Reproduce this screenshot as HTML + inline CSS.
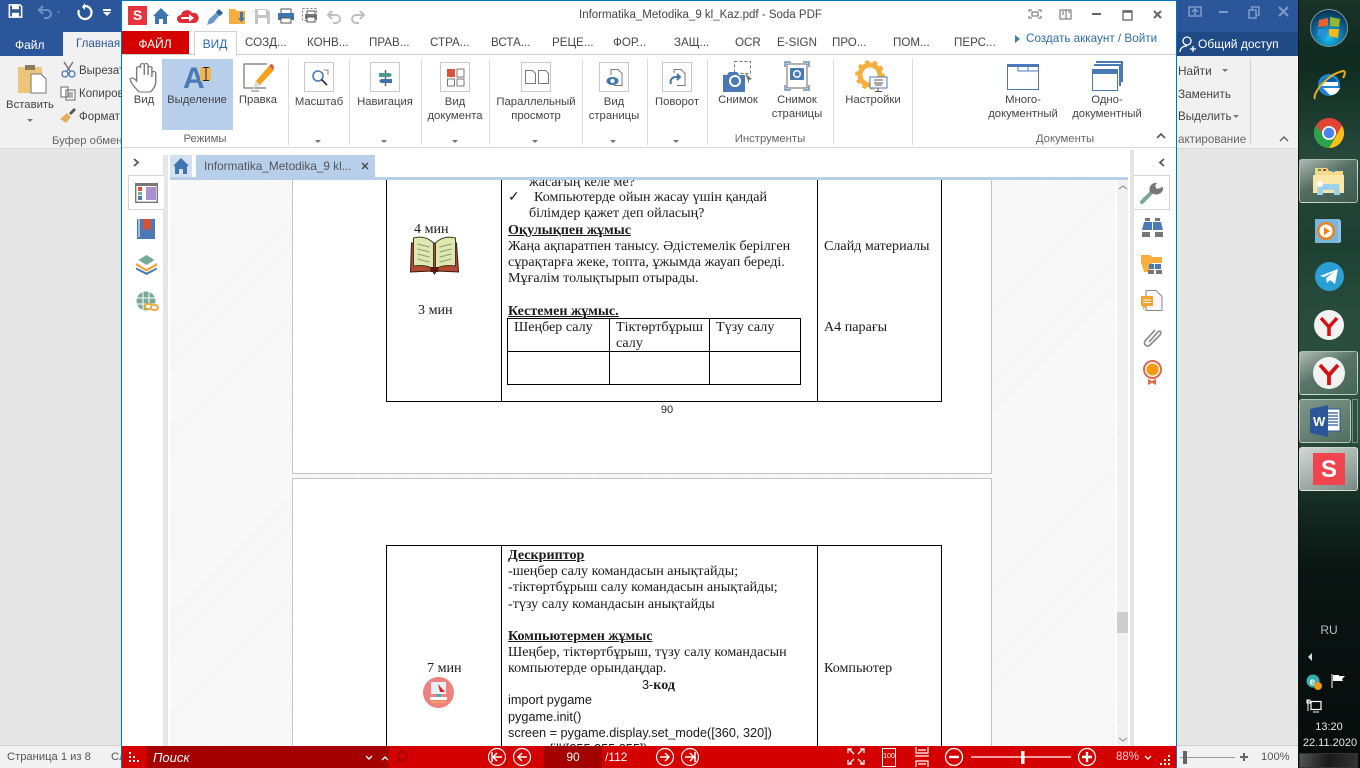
<!DOCTYPE html>
<html><head><meta charset="utf-8"><style>
html,body{margin:0;padding:0;width:1360px;height:768px;overflow:hidden;background:#e6e6e6}
#r{position:relative;width:1360px;height:768px;overflow:hidden;font-family:"Liberation Sans",sans-serif;font-size:11.3px;color:#444}
.a{position:absolute}
.t{position:absolute;white-space:nowrap;line-height:14px}
.c{position:absolute;white-space:nowrap;line-height:14px;text-align:center;transform:translateX(-50%)}
.s{position:absolute;width:1px;background:#dcdcdc;top:59px;height:86px}
.b{position:absolute;width:28px;height:28px;border:1px solid #c8c8c8;background:#fff;top:62px}
.p{position:absolute;white-space:nowrap;font-family:"Liberation Serif",serif;font-size:14.1px;line-height:16px;color:#1a1a1a}
.m{font-family:"Liberation Sans",sans-serif;font-size:12.7px}
.k{position:absolute;background:#000}
.tab{position:absolute;top:36px;white-space:nowrap;line-height:14px;color:#444;font-size:11.6px}
.w{position:absolute;white-space:nowrap;color:#444;font-size:11.5px;line-height:14px}
svg{position:absolute;overflow:visible}
.ar{position:absolute;width:0;height:0;border-left:3px solid transparent;border-right:3px solid transparent;border-top:3px solid #777}
.btn{position:absolute;left:1299px;width:59px;border:1px solid rgba(255,255,255,.55);border-radius:3px;background:linear-gradient(150deg,rgba(255,255,255,.62),rgba(255,255,255,.22) 45%,rgba(255,255,255,.12));box-sizing:border-box}
</style></head><body><div id="r">

<!-- Word left -->
<div class="a" style="left:0;top:0;width:122px;height:56px;background:#2b579a"></div>
<div class="a" style="left:63px;top:32px;width:59px;height:24px;background:#f1f1f1"></div>
<div class="t" style="left:15px;top:38px;color:#fff;font-size:12px">Файл</div>
<div class="t" style="left:76px;top:37px;color:#2b579a;font-size:11.600px">Главная</div>
<div class="a" style="left:0;top:56px;width:122px;height:92px;background:#f1f1f1;border-bottom:1px solid #d8d8d8"></div>
<svg style="left:8px;top:4px" width="15" height="14" viewBox="0 0 16 16"><path d="M1 1h12l2 2v12H1z" fill="none" stroke="#fff" stroke-width="1.800"/><path d="M4 1h8v5H4zM4 10h8v5H4z" fill="#fff"/></svg>
<svg style="left:36px;top:4px" width="26" height="16" viewBox="0 0 26 16"><path d="M4 6h7a4 4 0 0 1 0 8H8M7 2L3 6l4 4" fill="none" stroke="#6f8fc0" stroke-width="2"/><path d="M21 7l3 0-1.500 2z" fill="#6f8fc0"/></svg>
<svg style="left:76px;top:3px" width="18" height="18" viewBox="0 0 18 18"><path d="M9 3a6.500 6.500 0 1 1-6 4" fill="none" stroke="#fff" stroke-width="2.200"/><path d="M9 0v7l-3-3z" fill="#fff"/></svg>
<div class="a" style="left:103px;top:9px;width:8px;height:2px;background:#fff"></div>
<div class="a" style="left:103px;top:12px;border-left:4px solid transparent;border-right:4px solid transparent;border-top:4px solid #fff"></div>
<svg style="left:18px;top:64px" width="30" height="30" viewBox="0 0 30 30"><rect x="0" y="3" width="24" height="26" fill="#eac57a"/><rect x="7" y="1" width="10" height="5" fill="#8a7a60"/><path d="M13 12h10l5 5v14H13z" fill="#fff" stroke="#777" transform="translate(0,-2)"/></svg>
<div class="c" style="left:30px;top:98px">Вставить</div><div class="ar" style="left:27px;top:119px"></div>
<svg style="left:61px;top:62px" width="15" height="16" viewBox="0 0 15 16"><path d="M3 0l6 9M12 0L6 9" stroke="#777" stroke-width="1.500"/><circle cx="4" cy="12" r="3" fill="none" stroke="#4a7ab5" stroke-width="1.300"/><circle cx="11" cy="12" r="3" fill="none" stroke="#4a7ab5" stroke-width="1.300"/></svg>
<div class="w" style="left:79px;top:64px">Вырезать</div>
<svg style="left:60px;top:86px" width="16" height="15" viewBox="0 0 16 15"><path d="M1 1h7v10H1zM6 4h9v10H6z" fill="#fff" stroke="#666"/><path d="M8 7h5M8 9h5M8 11h5" stroke="#666"/></svg>
<div class="w" style="left:79px;top:87px">Копировать</div>
<svg style="left:60px;top:108px" width="16" height="15" viewBox="0 0 16 15"><path d="M0 11l7-6 4 4-5 6z" fill="#e0b060"/><path d="M9 5l5-5 2 2-5 5z" fill="#555"/></svg>
<div class="w" style="left:79px;top:110px">Формат</div>
<div class="w" style="left:52px;top:134px;color:#666;font-size:11.300px">Буфер обмена</div>

<!-- Word right -->
<div class="a" style="left:1177px;top:0;width:121px;height:32px;background:#2b579a"></div>
<div class="a" style="left:1177px;top:32px;width:121px;height:24px;background:#1f4a84"></div>
<div class="a" style="left:1177px;top:56px;width:121px;height:92px;background:#f1f1f1;border-bottom:1px solid #d8d8d8;box-sizing:content-box"></div>
<svg style="left:1189px;top:5px" width="100" height="16" viewBox="0 0 100 16" fill="none" stroke="#7f9cc8" stroke-width="1.500"><rect x="0" y="2" width="12" height="9"/><path d="M6 10V5M3 7l3-3 3 3"/><path d="M30 7h9" stroke-width="2"/><path d="M60 5h7v8h-7zM63 5V2h7v8h-3"/><path d="M90 2l9 9M99 2l-9 9" stroke-width="2"/></svg>
<svg style="left:1179px;top:36px" width="17" height="17" viewBox="0 0 17 17" fill="none" stroke="#fff" stroke-width="1.300"><circle cx="8" cy="5" r="4"/><path d="M1 16c0-4 3-6 7-6M11 13h6M14 10v6"/></svg>
<div class="t" style="left:1198px;top:37px;color:#fff;font-size:12px">Общий доступ</div>
<div class="w" style="left:1178px;top:64px;font-size:11.800px">Найти</div><div class="ar" style="left:1222px;top:69px"></div>
<div class="w" style="left:1178px;top:87px;font-size:11.800px">Заменить</div>
<div class="w" style="left:1178px;top:110px;font-size:11.600px">Выделить</div><div class="ar" style="left:1233px;top:115px"></div>
<div class="w" style="left:1178px;top:133px;color:#666;font-size:11.600px">актирование</div>
<div class="a" style="left:1250px;top:60px;width:1px;height:84px;background:#d0d0d0"></div>
<svg style="left:1279px;top:136px" width="10" height="6" viewBox="0 0 10 6"><path d="M1 5l4-4 4 4" fill="none" stroke="#666" stroke-width="1.500"/></svg>
<div class="a" style="left:1177px;top:149px;width:121px;height:597px;background:#e6e6e6"></div>

<!-- Word status -->
<div class="a" style="left:0;top:745px;width:122px;height:23px;background:#f1f1f1;border-top:1px solid #d0d0d0;box-sizing:border-box"></div>
<div class="t" style="left:7px;top:750px;color:#555;font-size:11.200px">Страница 1 из 8</div>
<div class="t" style="left:111px;top:750px;color:#555;font-size:11.200px">Сл</div>
<div class="a" style="left:1177px;top:745px;width:121px;height:23px;background:#f1f1f1;border-top:1px solid #d0d0d0;box-sizing:border-box"></div>
<div class="a" style="left:1180px;top:757px;width:55px;height:1px;background:#999"></div>
<div class="a" style="left:1183px;top:751px;width:4px;height:13px;background:#666"></div>
<div class="a" style="left:1240px;top:756px;width:8px;height:2px;background:#666"></div><div class="a" style="left:1243px;top:753px;width:2px;height:8px;background:#666"></div>
<div class="t" style="left:1261px;top:750px;color:#555;font-size:11.200px">100%</div>

<!-- Taskbar -->
<div class="a" style="left:1298px;top:0;width:62px;height:768px;background:linear-gradient(180deg,#1a3328 0,#0f2a20 8%,#25483a 20%,#1d4032 32%,#2a4d3e 42%,#2b5240 56%,#142a22 66%,#0a1512 74%,#060c0b 100%)"></div>
<div class="a" style="left:1298px;top:0;width:1px;height:768px;background:#0a1410"></div>
<div class="btn" style="top:159px;height:44px"></div>
<div class="btn" style="top:351px;height:44px"></div>
<div class="btn" style="top:399px;height:44px;width:52px;background:linear-gradient(150deg,rgba(255,255,255,.4),rgba(255,255,255,.18))"></div>
<div class="a" style="left:1352px;top:399px;width:6px;height:44px;border:1px solid rgba(255,255,255,.35);box-sizing:border-box"></div>
<div class="btn" style="top:447px;height:44px;background:linear-gradient(150deg,rgba(255,255,255,.78),rgba(255,255,255,.42))"></div>
<svg style="left:1309px;top:8px" width="40" height="40" viewBox="0 0 40 40"><defs><radialGradient id="o" cx=".5" cy=".75" r=".75"><stop offset="0" stop-color="#19c3ee"/><stop offset=".6" stop-color="#0c5f93"/><stop offset="1" stop-color="#0a2c44"/></radialGradient></defs><circle cx="20" cy="20" r="18.500" fill="url(#o)" stroke="#7f9aa5"/><path d="M10 12l9-2v8l-10 1z" fill="#e8632b"/><path d="M21 9l10 2-1 8-9-1z" fill="#93b82c"/><path d="M9 21l9 0-1 8-9-2z" fill="#2b8fd8"/><path d="M20 21l10 0-1 9-9-2z" fill="#f4b81d"/></svg>
<svg style="left:1312px;top:69px" width="34" height="32" viewBox="0 0 34 32"><circle cx="17" cy="16" r="11" fill="#1f85d8"/><path d="M9 14h16c0-4-3-6-8-6-3 0-6 2-8 6z" fill="#0b5aa8"/><rect x="10" y="13" width="16" height="4" fill="#fff"/><path d="M11 19h17c-2 5-5 7-10 7" fill="#fff"/><path d="M3 30C0 25 14 6 31 2c3 0 2 4 0 7" fill="none" stroke="#e7ad23" stroke-width="2"/></svg>
<svg style="left:1314px;top:118px" width="30" height="30" viewBox="0 0 30 30"><circle cx="15" cy="15" r="15" fill="#e34234"/><path d="M15 0a15 15 0 0 1 13 7.500H15z" fill="#e34234"/><path d="M28 7.500A15 15 0 0 1 15 30l6.500-11z" fill="#fbc116"/><path d="M2 7.500A15 15 0 0 0 15 30l6.500-11L15 22 8 15z" fill="#2ba24c"/><circle cx="15" cy="15" r="7" fill="#fff"/><circle cx="15" cy="15" r="5.300" fill="#4a86e8"/></svg>
<svg style="left:1313px;top:167px" width="32" height="30" viewBox="0 0 32 30"><path d="M2 1h12l2 3h14v20H2z" fill="#f4d98c"/><rect x="5" y="2" width="3" height="2" fill="#3a3"/><rect x="10" y="2" width="3" height="2" fill="#d33"/><rect x="19" y="3" width="3" height="2" fill="#38d"/><path d="M0 8h31v18H0z" fill="#fae6a6"/><path d="M5 17h21l1 11h-6v-5H10v5H4z" fill="#9fd0ea"/><circle cx="7" cy="17" r="3" fill="#fff"/></svg>
<svg style="left:1314px;top:218px" width="28" height="26" viewBox="0 0 28 26"><path d="M3 1h22l2 2v21l-2 1H3z" fill="#8cc5e8"/><path d="M1 1h23v24H1z" fill="#7ab6dc"/><circle cx="12" cy="13" r="9" fill="#ef7f1a"/><circle cx="12" cy="13" r="6.500" fill="#fff"/><path d="M10 9l6 4-6 4z" fill="#ef7f1a"/></svg>
<svg style="left:1315px;top:262px" width="29" height="29" viewBox="0 0 29 29"><circle cx="14.500" cy="14.500" r="14.500" fill="#2a9fd6"/><path d="M5 14l18-7-3 15-5-4-3 3-1-5 8-6-10 5z" fill="#fff"/></svg>
<svg style="left:1314px;top:310px" width="30" height="30" viewBox="0 0 30 30"><circle cx="15" cy="15" r="15" fill="#f2f2f2"/><path d="M7 8l8 9 8-9M15 17v9" fill="none" stroke="#d40f14" stroke-width="3.500"/></svg>
<svg style="left:1313px;top:357px" width="32" height="32" viewBox="0 0 32 32"><circle cx="16" cy="16" r="16" fill="#f2f2f2"/><path d="M7 8l9 10 9-10M16 18v10" fill="none" stroke="#d40f14" stroke-width="3.800"/></svg>
<svg style="left:1310px;top:405px" width="31" height="32" viewBox="0 0 31 32"><path d="M14 4h16v22H14z" fill="#fff" stroke="#2b579a"/><path d="M17 8h11M17 11h11M17 14h11M17 17h11M17 20h11" stroke="#2b579a" stroke-width="1.300"/><path d="M0 4l18-4v32L0 28z" fill="#2b579a"/><text x="3" y="21" font-family="Liberation Sans,sans-serif" font-weight="700" font-size="13" fill="#fff">W</text></svg>
<div class="a" style="left:1313px;top:453px;width:32px;height:32px;background:#f0444e"></div>
<div class="c" style="left:1329px;top:458px;color:#fff;font-size:24px;line-height:24px;font-weight:700">S</div>
<div class="c" style="left:1329px;top:623px;color:#b8c0bc;font-size:12px">RU</div>
<div class="a" style="left:1308px;top:653px;border-top:4px solid transparent;border-bottom:4px solid transparent;border-right:4px solid #ddd"></div>
<svg style="left:1306px;top:674px" width="16" height="16" viewBox="0 0 16 16"><circle cx="7" cy="7" r="6.500" fill="#35b0ae"/><text x="3.500" y="11" font-size="10" font-weight="700" fill="#fff" font-family="Liberation Sans,sans-serif">e</text><circle cx="12" cy="12" r="4" fill="#f09a1a"/></svg>
<svg style="left:1331px;top:674px" width="14" height="14" viewBox="0 0 14 14"><path d="M1 0v14" stroke="#fff"/><path d="M2 1h6v1h6l-3 3 1 2H8L2 7z" fill="#fff"/></svg>
<svg style="left:1307px;top:699px" width="15" height="14" viewBox="0 0 15 14" fill="none" stroke="#fff"><rect x="4" y="2.500" width="10" height="8" stroke-width="1.200"/><path d="M6 13h6M1 1v11M0 1h3v3H0z"/></svg>
<div class="c" style="left:1329px;top:720px;color:#e8e8e8;font-size:11px">13:20</div>
<div class="c" style="left:1330px;top:736px;color:#e8e8e8;font-size:11px">22.11.2020</div>
<div class="a" style="left:1299px;top:753px;width:59px;height:15px;background:linear-gradient(100deg,#555,#1a1a1a 50%,#333);border:1px solid #333;box-sizing:border-box"></div>

<!-- Soda window -->
<div class="a" style="left:122px;top:0;width:1055px;height:768px;background:#fff"></div>
<div class="a" style="left:122px;top:0;width:1055px;height:1px;background:#0072c6"></div>
<div class="a" style="left:121px;top:0;width:1px;height:768px;background:#0072c6"></div>
<div class="a" style="left:1176px;top:0;width:1px;height:768px;background:#0072c6"></div>

<div class="a" style="left:128px;top:6px;width:19px;height:19px;background:#e8343f"></div>
<div class="c" style="left:137.500px;top:8px;color:#fff;font-weight:700;font-size:14px">S</div>
<svg style="left:153px;top:8px" width="16" height="16" viewBox="0 0 16 16"><path d="M8 0L0 8h2v8h4v-5h4v5h4V8h2z" fill="#3d76ad"/></svg>
<svg style="left:177px;top:9px" width="22" height="15" viewBox="0 0 22 15"><path d="M4 14a4 4 0 0 1 0-8 6 6 0 0 1 11-2 5 5 0 0 1 3 10z" fill="#e32b35"/><path d="M4 8h8V5l5 4-5 4v-3H4z" fill="#fff"/></svg>
<svg style="left:207px;top:9px" width="16" height="16" viewBox="0 0 16 16"><path d="M0 16l2-6 8-7 3 3-7 8z" fill="#6a98c8"/><path d="M9 3l3-3 4 4-3 3z" fill="#2f5f94"/></svg>
<svg style="left:229px;top:9px" width="17" height="15" viewBox="0 0 17 15"><path d="M0 0h6l2 2h8v13H0z" fill="#f5ae3d"/><path d="M11 3v6H9l3.500 4L16 9h-2V3z" fill="#3d76ad"/></svg>
<svg style="left:255px;top:9px" width="15" height="15" viewBox="0 0 15 15"><path d="M0 0h12l3 3v12H0z" fill="#c5c5c5"/><rect x="3" y="1" width="8" height="5" fill="#fff"/><rect x="3" y="9" width="9" height="6" fill="#fff"/></svg>
<svg style="left:278px;top:9px" width="16" height="15" viewBox="0 0 16 15"><rect x="3" y="0" width="10" height="5" fill="#fff" stroke="#555"/><rect x="0" y="4" width="16" height="7" fill="#3d76ad"/><rect x="3" y="9" width="10" height="5" fill="#fff" stroke="#555"/></svg>
<svg style="left:302px;top:8px" width="16" height="16" viewBox="0 0 16 16"><rect x=".5" y=".5" width="14" height="12" fill="none" stroke="#777" stroke-dasharray="2 2"/><rect x="5" y="3" width="8" height="4" fill="#fff" stroke="#555"/><rect x="3" y="6" width="12" height="5" fill="#777"/><rect x="5" y="9" width="8" height="5" fill="#fff" stroke="#555"/></svg>
<svg style="left:327px;top:10px" width="14" height="14" viewBox="0 0 14 14"><path d="M5 1L1 5l4 4M1 5h8a4 4 0 0 1 0 8H6" fill="none" stroke="#c0c0c0" stroke-width="2"/></svg>
<svg style="left:351px;top:10px" width="14" height="14" viewBox="0 0 14 14"><path d="M9 1l4 4-4 4M13 5H5a4 4 0 0 0 0 8h3" fill="none" stroke="#c0c0c0" stroke-width="2"/></svg>
<div class="t" style="left:579px;top:8px;color:#444;font-size:11.500px">Informatika_Metodika_9 kl_Kaz.pdf - Soda PDF</div>
<svg style="left:1029px;top:9px" width="140" height="13" viewBox="0 0 140 13" fill="none" stroke="#666"><path d="M0 3V1h3M9 1h3v2M12 7v2H9M3 9H0V7"/><rect x="3" y="3" width="6" height="4"/><path d="M31 1h6v9h-6zM37 1h5v9h-5zM33 3h2M33 5h2M39 3h2" /><path d="M63 5h9" stroke-width="2"/><rect x="94" y="2" width="9" height="9" stroke-width="1.300"/><path d="M94 2.500h9" stroke-width="2.500"/><path d="M125 2l7 7M132 2l-7 7" stroke-width="2"/></svg>

<!-- soda tabs -->
<div class="a" style="left:122px;top:31px;width:67px;height:24px;background:#d40000"></div>
<div class="c" style="left:155px;top:37px;color:#fff;font-size:12px">ФАЙЛ</div>
<div class="a" style="left:122px;top:54px;width:1054px;height:1px;background:#d0d0d0"></div>
<div class="a" style="left:194px;top:31px;width:41px;height:24px;background:#fff;border:1px solid #d0d0d0;border-bottom:0"></div>
<div class="c" style="left:215px;top:37px;color:#2a6cb0;font-size:12px">ВИД</div>
<div class="tab" style="left:245px">СОЗД...</div>
<div class="tab" style="left:307px">КОНВ...</div>
<div class="tab" style="left:369px">ПРАВ...</div>
<div class="tab" style="left:430px">СТРА...</div>
<div class="tab" style="left:491px">ВСТА...</div>
<div class="tab" style="left:552px">РЕЦЕ...</div>
<div class="tab" style="left:613px">ФОР...</div>
<div class="tab" style="left:674px">ЗАЩ...</div>
<div class="tab" style="left:735px">OCR</div>
<div class="tab" style="left:777px">E-SIGN</div>
<div class="tab" style="left:832px">ПРО...</div>
<div class="tab" style="left:893px">ПОМ...</div>
<div class="tab" style="left:954px">ПЕРС...</div>
<div class="a" style="left:1015px;top:35px;border-top:4px solid transparent;border-bottom:4px solid transparent;border-left:5px solid #4a7ab5"></div>
<div class="t" style="left:1026px;top:32px;color:#2a6cb0;font-size:11.700px">Создать аккаунт / Войти</div>

<!-- ribbon -->
<div class="a" style="left:162px;top:59px;width:71px;height:71px;background:#b8cfec"></div>
<svg style="left:129px;top:62px" width="28" height="31" viewBox="0 0 22 31" preserveAspectRatio="none"><path d="M8 30C5 26 1 21 1 17c1-2 3-1 5 2V6c0-2 3-2 3 0V3c0-2 3-2 3 0v10V3c0-2 3-2 3 0v10V6c0-2 3-2 3 0v9-4c0-2 3-2 3 0v9c0 4-2 7-4 10z" fill="#fff" stroke="#777" stroke-width="1.100"/></svg>
<div class="c" style="left:144px;top:93px">Вид</div>
<div class="t" style="left:183px;top:64px;color:#4a7ab5;font-size:30px;line-height:30px;font-weight:700">A</div>
<div class="a" style="left:200px;top:67px;width:11px;height:14px;background:#eeb45a"></div>
<svg style="left:202px;top:67px" width="8" height="14" viewBox="0 0 8 14"><path d="M1 .5h6M1 13.500h6M4 .5v13" stroke="#222" fill="none"/></svg>
<div class="c" style="left:197px;top:93px">Выделение</div>
<svg style="left:243px;top:63px" width="33" height="29" viewBox="0 0 33 29"><path d="M24 1H1v24h22" fill="none" stroke="#555"/><path d="M8 28h8" stroke="#777"/><path d="M10 26l3-8L26 3l5 4-14 15z" fill="#f4a21c"/><path d="M26 3l2-2c2 0 3 2 3 4l-1 2z" fill="#d95f4a"/><path d="M10 26l3-8 4 4z" fill="#ddd"/></svg>
<div class="c" style="left:258px;top:93px">Правка</div>
<div class="c" style="left:205px;top:132px;color:#666">Режимы</div>
<div class="s" style="left:288px"></div><div class="s" style="left:349px"></div><div class="s" style="left:421px"></div><div class="s" style="left:489px"></div><div class="s" style="left:582px"></div><div class="s" style="left:647px"></div><div class="s" style="left:707px"></div><div class="s" style="left:833px"></div><div class="s" style="left:912px"></div>

<div class="b" style="left:304px"></div>
<svg style="left:311px;top:69px" width="18" height="18" viewBox="0 0 18 18"><circle cx="7" cy="7" r="5" fill="none" stroke="#4a7ab5" stroke-width="1.600"/><path d="M10.500 10.500L16 16" stroke="#333" stroke-width="1.800"/><path d="M13 1h4v5" fill="none" stroke="#888"/></svg>
<div class="c" style="left:319px;top:95px">Масштаб</div><div class="ar" style="left:315px;top:140px"></div>
<div class="b" style="left:370px"></div>
<svg style="left:378px;top:70px" width="15" height="16" viewBox="0 0 15 16"><path d="M7.500 0v16" stroke="#666" stroke-width="1.500"/><path d="M1 3h11l2 2-2 2H1z" fill="#4f9a8a"/><path d="M14 9H3l-2 2 2 2h11z" fill="#3d76ad"/></svg>
<div class="c" style="left:385px;top:95px">Навигация</div><div class="ar" style="left:381px;top:140px"></div>
<div class="b" style="left:440px"></div>
<svg style="left:447px;top:69px" width="18" height="18" viewBox="0 0 18 18"><rect x="0" y="0" width="8" height="8" fill="#d9533b"/><rect x="10" y="0" width="7" height="8" fill="#fff" stroke="#777"/><rect x=".5" y="10" width="7" height="7" fill="#fff" stroke="#777"/><rect x="10" y="10" width="7" height="7" fill="#fff" stroke="#777"/></svg>
<div class="c" style="left:455px;top:95px">Вид</div><div class="c" style="left:455px;top:109px">документа</div><div class="ar" style="left:452px;top:140px"></div>
<div class="b" style="left:521px"></div>
<svg style="left:525px;top:70px" width="24" height="14" viewBox="0 0 24 14" fill="#fff" stroke="#777"><path d="M.5.5h7l3 3v10H.5zM13.500.5h7l3 3v10h-10z"/></svg>
<div class="c" style="left:536px;top:95px">Параллельный</div><div class="c" style="left:536px;top:109px">просмотр</div><div class="ar" style="left:532px;top:140px"></div>
<div class="b" style="left:599px"></div>
<svg style="left:606px;top:69px" width="18" height="18" viewBox="0 0 18 18"><path d="M5 6V.5h7l4 4v12H8" fill="#fff" stroke="#777"/><ellipse cx="6.500" cy="12" rx="6" ry="4" fill="#3d76ad"/><circle cx="6.500" cy="12" r="2.200" fill="#fff"/></svg>
<div class="c" style="left:614px;top:95px">Вид</div><div class="c" style="left:614px;top:109px">страницы</div><div class="ar" style="left:610px;top:140px"></div>
<div class="b" style="left:662px"></div>
<svg style="left:669px;top:69px" width="18" height="18" viewBox="0 0 18 18"><path d="M5 4V.5h7l4 4v12H8" fill="#fff" stroke="#777"/><path d="M2 15a5 5 0 0 1 4-7h5M8 5l3 3-3 3" fill="none" stroke="#3d76ad" stroke-width="2"/></svg>
<div class="c" style="left:677px;top:95px">Поворот</div><div class="ar" style="left:673px;top:140px"></div>

<svg style="left:723px;top:61px" width="30" height="31" viewBox="0 0 30 31"><rect x="11.500" y=".5" width="16" height="12" fill="none" stroke="#777" stroke-dasharray="3 2"/><path d="M0 14h4l2-3h8l2 3h6v17H0z" fill="#4a7ab5"/><circle cx="12" cy="20" r="6" fill="#fff"/><circle cx="12" cy="20" r="4" fill="#4a7ab5"/><path d="M22 12l7 6-3 1 0 4z" fill="#777"/></svg>
<div class="c" style="left:738px;top:93px">Снимок</div>
<svg style="left:784px;top:61px" width="26" height="30" viewBox="0 0 26 30"><path d="M1 6V1h6M19 1h6v5M25 24v5h-6M7 29H1v-5" fill="none" stroke="#4a7ab5" stroke-width="1.300"/><rect x="3" y="3" width="20" height="24" fill="#fff" stroke="#666"/><rect x="6" y="7" width="14" height="12" rx="1" fill="#4a7ab5"/><circle cx="13" cy="13" r="4" fill="#fff"/><circle cx="13" cy="13" r="2.500" fill="#4a7ab5"/></svg>
<div class="c" style="left:797px;top:93px">Снимок</div><div class="c" style="left:797px;top:107px">страницы</div>
<div class="c" style="left:770px;top:132px;color:#666">Инструменты</div>
<svg style="left:856px;top:61px" width="33" height="31" viewBox="0 0 33 31"><circle cx="14" cy="14" r="10" fill="none" stroke="#f7ae3c" stroke-width="5"/><circle cx="14" cy="14" r="13" fill="none" stroke="#f7ae3c" stroke-width="3.500" stroke-dasharray="4 4"/><rect x="14" y="16" width="17" height="11" fill="#fff" stroke="#4a7ab5"/><path d="M18 19h9M18 22h9M19 24h7M22 27v3M19 30.500h7" stroke="#555"/></svg>
<div class="c" style="left:873px;top:93px">Настройки</div>
<svg style="left:1007px;top:64px" width="32" height="26" viewBox="0 0 32 26"><rect x=".5" y=".5" width="31" height="25" fill="#fff" stroke="#4a7ab5"/><rect x="0" y="0" width="32" height="3" fill="#4a7ab5"/><path d="M11 7h21M11 3v4M21 3v4" stroke="#4a7ab5"/></svg>
<div class="c" style="left:1023px;top:93px">Много-</div><div class="c" style="left:1023px;top:107px">документный</div>
<svg style="left:1092px;top:62px" width="30" height="29" viewBox="0 0 30 29"><path d="M4 0h26v20" fill="none" stroke="#4a7ab5" stroke-width="2"/><path d="M2 3h26v21" fill="none" stroke="#4a7ab5" stroke-width="2"/><rect x=".5" y="7.500" width="25" height="21" fill="#fff" stroke="#4a7ab5"/><rect x="0" y="7" width="26" height="5" fill="#4a7ab5"/></svg>
<div class="c" style="left:1107px;top:93px">Одно-</div><div class="c" style="left:1107px;top:107px">документный</div>
<div class="c" style="left:1065px;top:132px;color:#666">Документы</div>
<svg style="left:1156px;top:132px" width="10" height="7" viewBox="0 0 10 7"><path d="M1 6l4-4 4 4" fill="none" stroke="#555" stroke-width="1.600"/></svg>
<div class="a" style="left:122px;top:147px;width:1054px;height:1px;background:#d8d8d8"></div>

<!-- Doc bar -->
<svg style="left:133px;top:158px" width="7" height="9" viewBox="0 0 7 9"><path d="M1 1l4 3.500L1 8" fill="none" stroke="#555" stroke-width="1.800"/></svg>
<svg style="left:1158px;top:158px" width="7" height="9" viewBox="0 0 7 9"><path d="M6 1L2 4.500 6 8" fill="none" stroke="#555" stroke-width="1.800"/></svg>
<div class="a" style="left:170px;top:155px;width:22px;height:22px;background:#d3e0f2"></div>
<svg style="left:173px;top:158px" width="16" height="16" viewBox="0 0 16 16"><path d="M8 0L0 8h2v8h4v-5h4v5h4V8h2z" fill="#3d76ad"/></svg>
<div class="a" style="left:196px;top:155px;width:179px;height:22px;background:#b8cfec"></div>
<div class="t" style="left:204px;top:159px;color:#555;font-size:11.800px">Informatika_Metodika_9 kl...</div>
<svg style="left:361px;top:162px" width="8" height="8" viewBox="0 0 8 8"><path d="M1 1l6 6M7 1L1 7" stroke="#444" stroke-width="1.300"/></svg>

<!-- Doc area -->
<div class="a" style="left:163px;top:155px;width:5px;height:591px;background:#e6e6e6"></div>
<div class="a" style="left:170px;top:180px;width:945px;height:566px;background:repeating-linear-gradient(135deg,#fff 0,#fff 1px,#f0f0f0 1px,#f0f0f0 2px)"></div>
<div class="a" style="left:292px;top:180px;width:698px;height:293px;background:#fff;border:1px solid #c4c4c4;border-top:0"></div>
<div class="a" style="left:292px;top:478px;width:698px;height:270px;background:#fff;border:1px solid #c4c4c4"></div>

<!-- table 1 -->
<div class="k" style="left:386px;top:180px;width:1px;height:222px"></div>
<div class="k" style="left:501px;top:180px;width:1px;height:222px"></div>
<div class="k" style="left:817px;top:180px;width:1px;height:222px"></div>
<div class="k" style="left:941px;top:180px;width:1px;height:222px"></div>
<div class="k" style="left:386px;top:401px;width:556px;height:1px"></div>
<div class="a" style="left:507px;top:172px;width:300px;height:16px;overflow:hidden"><div class="p" style="left:22px;top:2px">жасағың келе ме?</div></div>
<div class="a" style="left:170px;top:177px;width:958px;height:3px;background:#b8cfec"></div>
<div class="p" style="left:508px;top:189px">✓</div>
<div class="p" style="left:534px;top:189px">Компьютерде ойын жасау үшін қандай</div>
<div class="p" style="left:529px;top:205px">білімдер қажет деп ойласың?</div>
<div class="p" style="left:508px;top:222px;font-weight:700;text-decoration:underline">Оқулықпен жұмыс</div>
<div class="p" style="left:508px;top:238px">Жаңа ақпаратпен танысу. Әдістемелік берілген</div>
<div class="p" style="left:508px;top:254px">сұрақтарға жеке, топта, ұжымда жауап береді.</div>
<div class="p" style="left:508px;top:270px">Мұғалім толықтырып отырады.</div>
<div class="p" style="left:508px;top:303px;font-weight:700;text-decoration:underline">Кестемен жұмыс.</div>
<svg style="left:410px;top:235px" width="49" height="39" viewBox="0 0 48 39"><path d="M1 8L0 37l22-1 2 3 2-3 22 1-2-29z" fill="#b24a32" stroke="#3a1a10"/><path d="M3 3c8-2 15 0 20 5v26C17 30 10 30 3 31z" fill="#dfe8b0" stroke="#3a3a20"/><path d="M45 3c-8-2-15 0-20 5v26c6-4 13-4 20-3z" fill="#dfe8b0" stroke="#3a3a20"/><path d="M7 9l12 3M7 14l12 3M7 19l12 3M7 24l12 3M41 9l-12 3M41 14l-12 3M41 19l-12 3M41 24l-12 3" stroke="#8a9a70"/><rect x="20" y="32" width="8" height="5" fill="#5a1a10"/></svg>
<div class="p" style="left:414px;top:221px">4 мин</div>
<div class="p" style="left:418px;top:302px">3 мин</div>
<div class="p" style="left:824px;top:238px">Слайд материалы</div>
<div class="p" style="left:824px;top:319px">А4 парағы</div>

<!-- inner table -->
<div class="k" style="left:507px;top:318px;width:294px;height:1px"></div>
<div class="k" style="left:507px;top:351px;width:294px;height:1px"></div>
<div class="k" style="left:507px;top:384px;width:294px;height:1px"></div>
<div class="k" style="left:507px;top:318px;width:1px;height:67px"></div>
<div class="k" style="left:609px;top:318px;width:1px;height:67px"></div>
<div class="k" style="left:709px;top:318px;width:1px;height:67px"></div>
<div class="k" style="left:800px;top:318px;width:1px;height:67px"></div>
<div class="p" style="left:514px;top:319px">Шеңбер салу</div>
<div class="p" style="left:616px;top:319px">Тіктөртбұрыш</div>
<div class="p" style="left:616px;top:335px">салу</div>
<div class="p" style="left:716px;top:319px">Түзу салу</div>
<div class="c" style="left:667px;top:403px;font-family:'Liberation Sans',sans-serif;font-size:11px;color:#222">90</div>

<!-- table 2 -->
<div class="k" style="left:386px;top:545px;width:556px;height:1px"></div>
<div class="k" style="left:386px;top:545px;width:1px;height:201px"></div>
<div class="k" style="left:501px;top:545px;width:1px;height:201px"></div>
<div class="k" style="left:817px;top:545px;width:1px;height:201px"></div>
<div class="k" style="left:941px;top:545px;width:1px;height:201px"></div>
<div class="p" style="left:508px;top:547px;font-weight:700;text-decoration:underline">Дескриптор</div>
<div class="p" style="left:508px;top:563px">-шеңбер салу командасын анықтайды;</div>
<div class="p" style="left:508px;top:579px">-тіктөртбұрыш салу командасын анықтайды;</div>
<div class="p" style="left:508px;top:596px">-түзу салу командасын анықтайды</div>
<div class="p" style="left:508px;top:628px;font-weight:700;text-decoration:underline">Компьютермен жұмыс</div>
<div class="p" style="left:508px;top:644px">Шеңбер, тіктөртбұрыш, түзу салу командасын</div>
<div class="p" style="left:508px;top:660px">компьютерде орындаңдар.</div>
<div class="p" style="left:642px;top:677px"><span class="m">3-</span><b>код</b></div>
<div class="p m" style="left:508px;top:692px">import pygame</div>
<div class="p m" style="left:508px;top:709px">pygame.init()</div>
<div class="p m" style="left:508px;top:725px">screen = pygame.display.set_mode([360, 320])</div>
<div class="p m" style="left:508px;top:741px">screen.fill([255,255,255])</div>
<div class="p" style="left:427px;top:660px">7 мин</div>
<div class="p" style="left:824px;top:660px">Компьютер</div>
<svg style="left:423px;top:677px" width="31" height="31" viewBox="0 0 31 31"><circle cx="15.500" cy="15.500" r="15.500" fill="#ef8080"/><rect x="8" y="5" width="15" height="12" fill="#e8f0f5"/><path d="M15 7l7 8-5 0z" fill="#d4202a"/><rect x="13" y="17" width="5" height="3" fill="#4fa7b8"/><rect x="7" y="20" width="17" height="3" fill="#fff"/><rect x="8" y="24" width="15" height="2" fill="#f0a060"/></svg>

<!-- scrollbar -->
<div class="a" style="left:1117px;top:180px;width:11px;height:566px;background:#f1f1f1"></div>
<svg style="left:1119px;top:185px" width="8" height="5" viewBox="0 0 8 5"><path d="M0 4l4-3 4 3" fill="none" stroke="#999" stroke-width="1.200"/></svg>
<svg style="left:1119px;top:737px" width="8" height="5" viewBox="0 0 8 5"><path d="M0 1l4 3 4-3" fill="none" stroke="#999" stroke-width="1.200"/></svg>
<div class="a" style="left:1117px;top:612px;width:11px;height:21px;background:#cdcdcd"></div>
<div class="a" style="left:1130px;top:150px;width:4px;height:596px;background:#e4e4e4"></div>

<!-- left sidebar -->
<div class="a" style="left:128px;top:175px;width:36px;height:35px;background:#fff;border:1px solid #d4d4d4;box-sizing:border-box;border-right:0"></div>
<svg style="left:135px;top:183px" width="23" height="20" viewBox="0 0 23 20"><rect x=".7" y=".7" width="21.600" height="18.600" fill="#fff" stroke="#777" stroke-width="1.400"/><rect x="0" y="0" width="23" height="3" fill="#777"/><rect x="11" y="4" width="10" height="13" fill="#ab8fcf"/><rect x="3" y="4" width="4" height="4" fill="#d9533b"/><rect x="3" y="9" width="4" height="3" fill="#79b29c"/><rect x="3" y="13" width="4" height="4" fill="#4a7ab5"/></svg>
<svg style="left:137px;top:219px" width="18" height="20" viewBox="0 0 18 20"><rect width="18" height="20" fill="#4a7ab5"/><path d="M2 0v18" stroke="#fff"/><path d="M6 0h8v12l-4-3-4 3z" fill="#d9533b"/></svg>
<svg style="left:136px;top:255px" width="21" height="20" viewBox="0 0 21 20"><path d="M10.500 0l8 5-8 5-8-5z" fill="#74aa96"/><path d="M0 8l10.500 6L21 8v2.500L10.500 16.500 0 10.500z" fill="#f3a32e"/><path d="M0 12.500l10.500 5 10.500-5v2L10.500 20 0 14.500z" fill="#4a7ab5"/></svg>
<svg style="left:136px;top:291px" width="23" height="21" viewBox="0 0 23 21"><circle cx="10" cy="10" r="9.500" fill="#79a896"/><path d="M1 7h18M1 13h18M7 1v18M13 1v18" stroke="#fff"/><rect x="9" y="13" width="7" height="5" rx="2.500" fill="#fff" stroke="#f3a32e" stroke-width="1.800"/><rect x="15" y="14" width="7" height="5" rx="2.500" fill="#fff" stroke="#f3a32e" stroke-width="1.800"/></svg>

<!-- right sidebar -->
<div class="a" style="left:1134px;top:175px;width:36px;height:35px;background:#fff;border:1px solid #d4d4d4;box-sizing:border-box;border-left:0"></div>
<svg style="left:1141px;top:181px" width="23" height="23" viewBox="0 0 23 23"><path d="M1 21L11 11" stroke="#79a896" stroke-width="4" stroke-linecap="round"/><path d="M10 11a6.500 6.500 0 0 1 7-9l-2 3 2 3 3-1 3-1a6.500 6.500 0 0 1-9 7z" fill="#777" transform="translate(-1,0)"/></svg>
<svg style="left:1142px;top:218px" width="21" height="20" viewBox="0 0 21 20"><rect x="3" y="0" width="5" height="3" fill="#777"/><rect x="13" y="0" width="5" height="3" fill="#777"/><path d="M2 4h8v8H0z" fill="#4a7ab5"/><path d="M11 4h8l2 8h-10z" fill="#4a7ab5"/><rect x="0" y="14" width="8" height="5" fill="#777"/><rect x="13" y="14" width="8" height="5" fill="#777"/></svg>
<svg style="left:1141px;top:254px" width="22" height="20" viewBox="0 0 22 20"><path d="M0 1h9l2 2h10v6H11l-3 9H3L0 8z" fill="#f7ae3c"/><rect x="8" y="10" width="5" height="5" fill="#4a7ab5"/><rect x="14" y="10" width="6" height="5" fill="#4a7ab5"/><rect x="7" y="16" width="6" height="4" fill="#777"/><rect x="15" y="16" width="6" height="4" fill="#777"/></svg>
<svg style="left:1141px;top:290px" width="22" height="21" viewBox="0 0 22 21"><path d="M5 .5h10l6 6v14H5z" fill="#f7f7f7" stroke="#888"/><path d="M0 6h12v10H5l-3 4v-4H0z" fill="#f3a32e"/><path d="M2 10h8M2 12.500h8" stroke="#fff"/></svg>
<svg style="left:1142px;top:327px" width="21" height="21" viewBox="0 0 21 21"><path d="M7 15l9-10c2-2 4 0 2 3L8 18c-3 3-7-1-5-4L13 3" fill="none" stroke="#888" stroke-width="1.600"/></svg>
<svg style="left:1143px;top:360px" width="19" height="26" viewBox="0 0 19 26"><circle cx="9.500" cy="9.500" r="8.500" fill="#fff" stroke="#dc6a4c" stroke-width="2"/><circle cx="9.500" cy="9.500" r="6" fill="#f79b0c"/><path d="M5 19l4 2 4-2v6l-4-2-4 2z" fill="#dc6a4c"/></svg>

<!-- status bar -->
<div class="a" style="left:122px;top:746px;width:1054px;height:22px;background:#d40000"></div>
<div class="a" style="left:147px;top:746px;width:242px;height:22px;background:#a50000"></div>
<div class="a" style="left:544px;top:746px;width:58px;height:22px;background:#a50000"></div>
<svg style="left:128px;top:751px" width="11" height="13" viewBox="0 0 11 13" fill="#fff"><rect x="1" y="1" width="2" height="2"/><rect x="1" y="5" width="2" height="2"/><rect x="1" y="9" width="2" height="2"/><rect x="5" y="5" width="2" height="2"/><rect x="5" y="9" width="2" height="2"/><rect x="9" y="9" width="2" height="2"/></svg>
<div class="t" style="left:153px;top:751px;color:#fff;font-style:italic;font-size:13px">Поиск</div>
<svg style="left:365px;top:755px" width="24" height="6" viewBox="0 0 24 6" fill="none" stroke="#fff" stroke-width="1.400"><path d="M1 1l3 3 3-3M17 5l3-3 3 3"/></svg>
<svg style="left:394px;top:750px" width="14" height="15" viewBox="0 0 14 15" fill="none" stroke="#a50000" stroke-width="1.800"><circle cx="8.500" cy="6" r="4.500"/><path d="M5.500 9.500L1 14"/></svg>
<svg style="left:488px;top:747px" width="212" height="20" viewBox="0 0 212 20" fill="none" stroke="#fff"><circle cx="9" cy="10" r="8.500" stroke-width="1.200"/><path d="M14 10H6M9 6l-4 4 4 4M4 5v10" stroke-width="1.500"/><circle cx="34" cy="10" r="8.500" stroke-width="1.200"/><path d="M39 10H30M34 6l-4 4 4 4" stroke-width="1.500"/><circle cx="177" cy="10" r="8.500" stroke-width="1.200"/><path d="M172 10h9M177 6l4 4-4 4" stroke-width="1.500"/><circle cx="202" cy="10" r="8.500" stroke-width="1.200"/><path d="M197 10h8M202 6l4 4-4 4M207 5v10" stroke-width="1.500"/></svg>
<div class="c" style="left:573px;top:750px;color:#fff;font-size:12px">90</div>
<div class="t" style="left:605px;top:750px;color:#fff;font-size:12px">/112</div>
<svg style="left:848px;top:748px" width="16" height="17" viewBox="0 0 16 17" fill="none" stroke="#fff" stroke-width="1.300"><path d="M0 5V1h4M12 1h4v4M16 12v4h-4M4 16H0v-4M1 1l5 5M15 1l-5 5M15 16l-5-5M1 16l5-5"/></svg>
<div class="a" style="left:882px;top:748px;width:12px;height:17px;border:1px solid #fff"></div>
<div class="c" style="left:889px;top:750px;color:#fff;font-size:7px">100</div>
<svg style="left:915px;top:747px" width="14" height="20" viewBox="0 0 14 20" fill="none" stroke="#fff" stroke-width="1.200"><path d="M1 0v6h12V0M1 20v-6h12v6M0 9h14M3 17h8M3 3h8"/></svg>
<svg style="left:945px;top:748px" width="152" height="18" viewBox="0 0 152 18" fill="none" stroke="#fff"><circle cx="9" cy="9" r="8.500" stroke-width="1.300"/><path d="M4 9h10" stroke-width="2.400"/><path d="M26 9h100" stroke-width="1.200"/><rect x="76" y="3" width="3.500" height="13" fill="#fff" stroke="none"/><circle cx="142" cy="9" r="8.500" stroke-width="1.300"/><path d="M137 9h10M142 4v10" stroke-width="2.400"/></svg>
<div class="t" style="left:1116px;top:750px;color:#f8d0d0;font-size:11.500px">88%</div>
<svg style="left:1144px;top:755px" width="8" height="5" viewBox="0 0 8 5"><path d="M1 1l3 3 3-3" fill="none" stroke="#fff" stroke-width="1.400"/></svg>
<svg style="left:1160px;top:755px" width="11" height="11" viewBox="0 0 11 11" fill="#fff"><rect x="8" y="0" width="2" height="2"/><rect x="4" y="4" width="2" height="2"/><rect x="8" y="4" width="2" height="2"/><rect x="0" y="8" width="2" height="2"/><rect x="4" y="8" width="2" height="2"/><rect x="8" y="8" width="2" height="2"/></svg>

</div></body></html>
